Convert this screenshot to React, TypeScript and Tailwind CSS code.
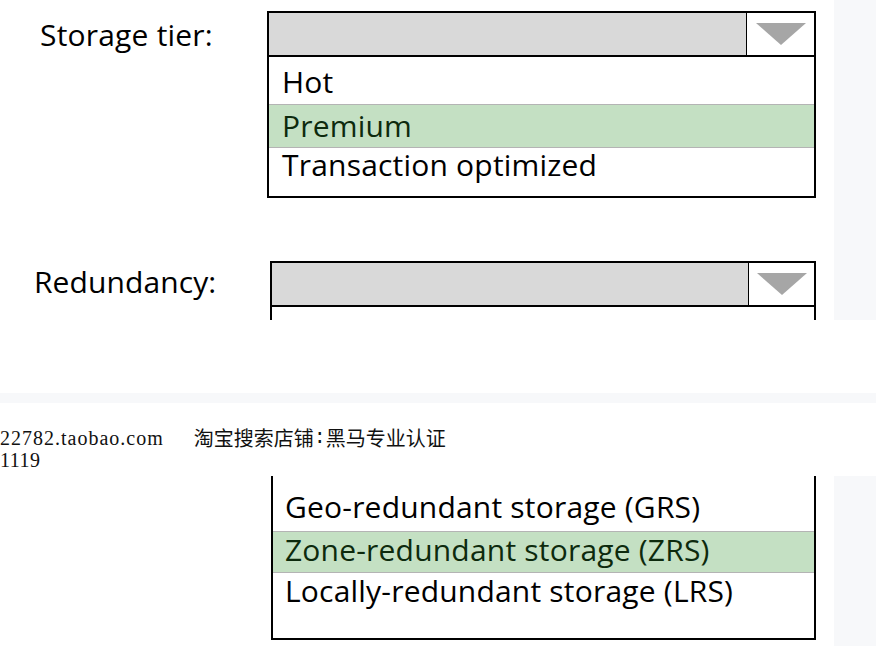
import React from "react";

const itemFont = { fontFamily: '"Open Sans", "Liberation Sans", sans-serif' };
const serif = { fontFamily: '"Liberation Serif", serif' };
const mono = { fontFamily: '"Liberation Mono", monospace' };
const cjk = { fontFamily: '"Noto Sans CJK SC", sans-serif' };

function Arrow() {
  return (
    <svg width="50" height="22" viewBox="0 0 50 22" className="block">
      <polygon points="0,0 50,0 25,22" fill="#a6a6a6" />
    </svg>
  );
}

function Header({ cellWidth }: { cellWidth: string }) {
  return (
    <div className="flex h-[44px] border-b-2 border-black">
      <div className="flex-1 bg-[#d9d9d9]" />
      <div className={`${cellWidth} flex items-center justify-center border-l border-black bg-white`}>
        <Arrow />
      </div>
    </div>
  );
}

function Option({ label, selected, h, pad }: { label: string; selected?: boolean; h: string; pad: string }) {
  return (
    <div
      className={`${h} ${pad} text-[30px] leading-none tracking-[0.2px] ${
        selected ? "bg-[#c4e0c3] text-[#0d2a0d]" : "bg-white text-black"
      }`}
    >
      {label}
    </div>
  );
}

export default function App() {
  return (
    <div className="w-[876px] h-[646px] bg-white overflow-hidden flex flex-col" style={itemFont}>
      {/* top panel */}
      <div className="flex h-[320px] shrink-0">
        <div className="flex-1 flex flex-col">
          <div className="flex pt-[11px]">
            <div className="w-[267px] pl-[40px] pt-[9px] text-[30px] tracking-[0.2px] text-black leading-none">
              Storage tier:
            </div>
            <div className="w-[549px] h-[187px] border-2 border-black flex flex-col">
              <Header cellWidth="w-[68px]" />
              <Option label="Hot" h="h-[47px]" pad="pl-[13px] pt-[10px]" />
              <div className="h-px bg-[#b4b4b4]" />
              <Option label="Premium" selected h="h-[43px]" pad="pl-[13px] pt-[6px]" />
              <div className="h-px bg-[#b4b4b4]" />
              <Option label="Transaction optimized" h="h-[48px]" pad="pl-[13px] pt-[2px]" />
            </div>
          </div>
          <div className="flex mt-[63px]">
            <div className="w-[270px] pl-[34px] pt-[6px] text-[30px] tracking-[0.1px] text-black leading-none">
              Redundancy:
            </div>
            <div className="w-[546px] h-[59px] border-2 border-b-0 border-black flex flex-col">
              <Header cellWidth="w-[66px]" />
            </div>
          </div>
        </div>
        <div className="w-[42px] bg-[#f7f8fa]" />
      </div>

      <div className="h-[73px] shrink-0" />
      <div className="h-[10px] shrink-0 bg-[#f7f8fa]" />

      {/* watermark */}
      <div className="h-[73px] shrink-0 pt-[24px] text-[#111] leading-[22px]">
        <div className="flex items-center whitespace-pre">
          <span className="text-[20px] tracking-[1px]" style={serif}>22782.taobao.com</span>
          <span className="ml-[30px] text-[20px]" style={cjk}>淘宝搜索店铺</span>
          <span className="text-[20px]" style={mono}>:</span>
          <span className="text-[20px]" style={cjk}>黑马专业认证</span>
        </div>
        <div className="text-[20px] tracking-[0.5px]" style={serif}>1119</div>
      </div>

      {/* bottom panel */}
      <div className="flex h-[170px] shrink-0">
        <div className="flex-1 pl-[271px]">
          <div className="w-[545px] h-[164px] border-2 border-t-0 border-black flex flex-col">
            <Option label="Geo-redundant storage (GRS)" h="h-[55px]" pad="pl-[12px] pt-[16px]" />
            <div className="h-px bg-[#b4b4b4]" />
            <Option label="Zone-redundant storage (ZRS)" selected h="h-[40px]" pad="pl-[12px] pt-[3px]" />
            <div className="h-px bg-[#b4b4b4]" />
            <div className="flex-1 pl-[12px] pt-[3px] text-[30px] tracking-[0.2px] leading-none text-black">
              Locally-redundant storage (LRS)
            </div>
          </div>
        </div>
        <div className="w-[42px] bg-[#f7f8fa]" />
      </div>
    </div>
  );
}
